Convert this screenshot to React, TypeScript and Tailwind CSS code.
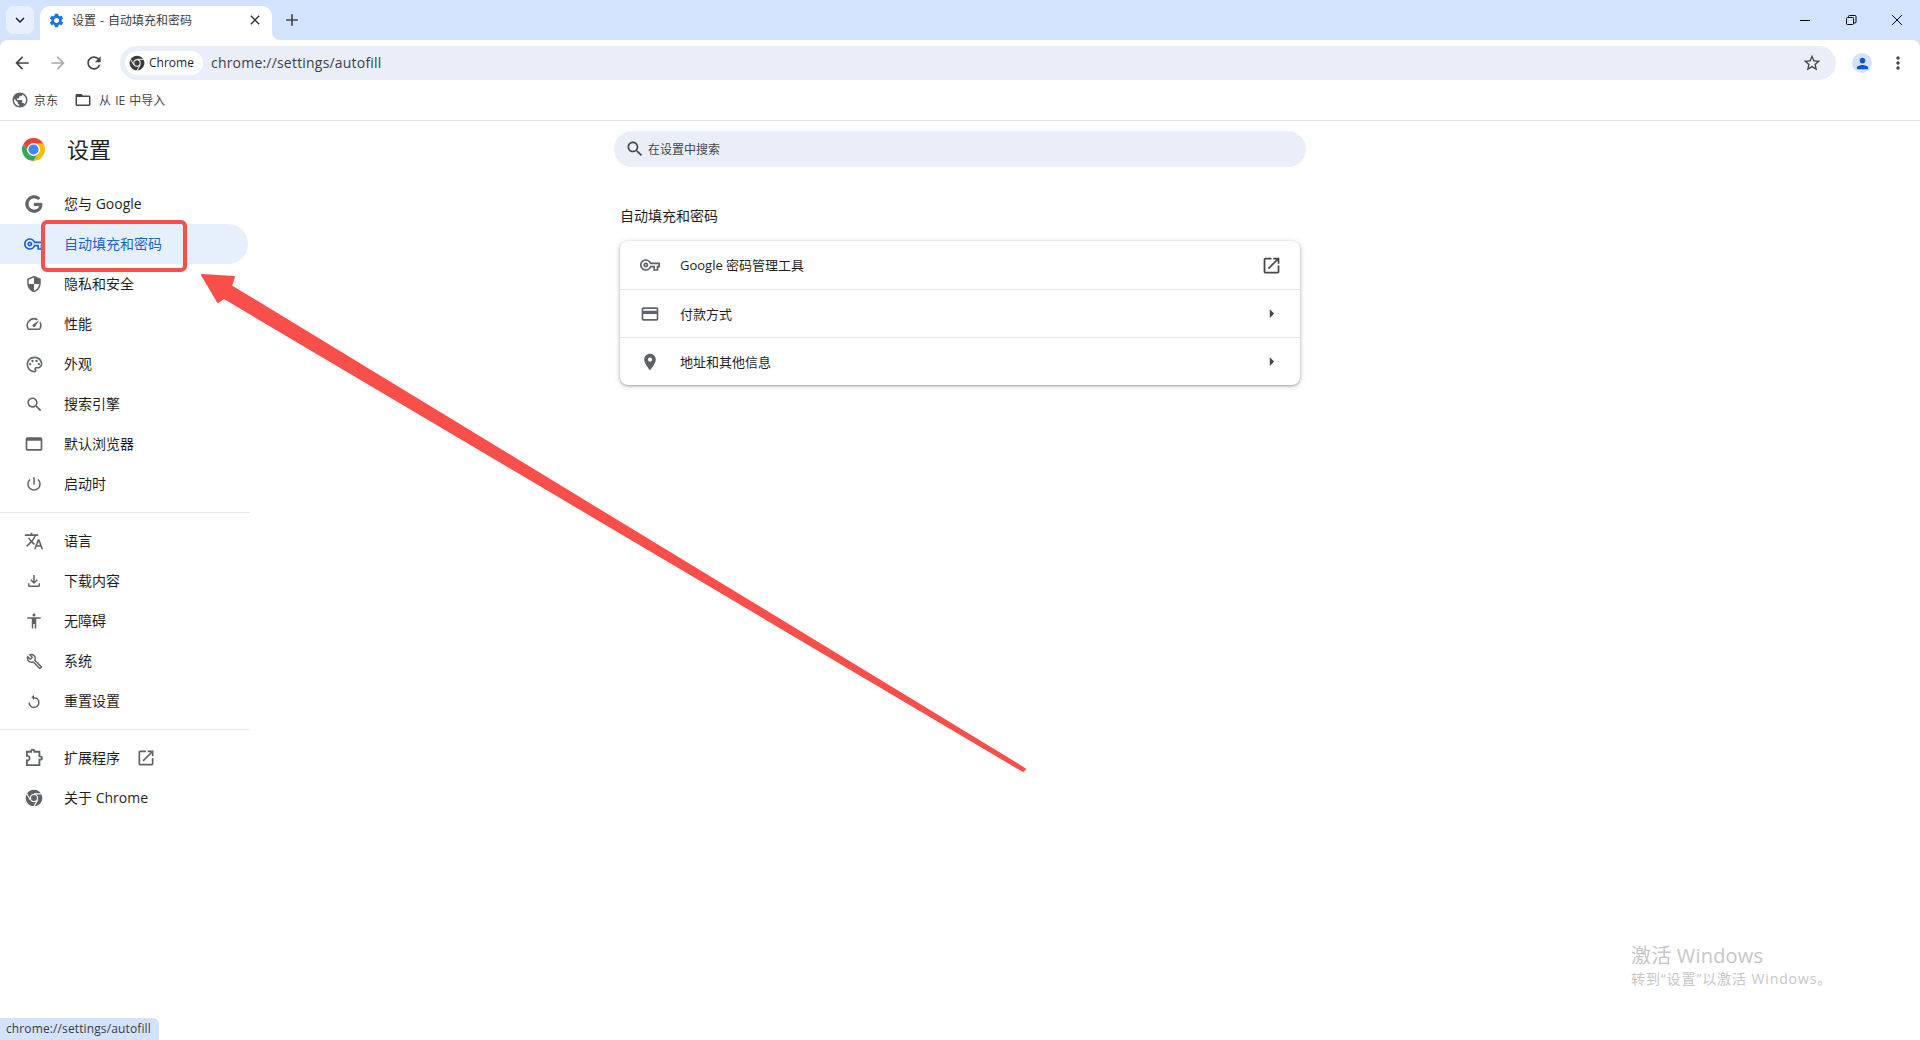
import React from 'react';

const paths = {
  key: 'M22 19h-6v-4h-2.68c-1.14 2.42-3.6 4-6.32 4-3.86 0-7-3.14-7-7s3.14-7 7-7c2.72 0 5.17 1.58 6.32 4H24v6h-2v4zm-4-2h2v-4h2v-2H11.95l-.23-.67C11.01 8.34 9.11 7 7 7c-2.76 0-5 2.24-5 5s2.24 5 5 5c2.11 0 4.01-1.34 4.72-3.33l.23-.67H18v4zM7 15c-1.65 0-3-1.35-3-3s1.35-3 3-3 3 1.35 3 3-1.35 3-3 3zm0-4c-.55 0-1 .45-1 1s.45 1 1 1 1-.45 1-1-.45-1-1-1z',
  google: 'M21.35 11.1H12.18V13.83H18.69C18.36 17.64 15.19 19.27 12.19 19.27C8.36 19.27 5 16.25 5 12C5 7.9 8.2 4.73 12.2 4.73C15.29 4.73 17.1 6.7 17.1 6.7L19 4.72C19 4.72 16.56 2 12.1 2C6.42 2 2.03 6.8 2.03 12C2.03 17.05 6.16 22 12.25 22C17.6 22 21.5 18.33 21.5 12.91C21.5 11.76 21.35 11.1 21.35 11.1Z',
  shield: 'M12 1L3 5v6c0 5.55 3.84 10.74 9 12 5.16-1.26 9-6.45 9-12V5l-9-4zm0 10.99h7c-.53 4.12-3.28 7.79-7 8.94V12H5V6.3l7-3.11v8.8z',
  speed: 'M20.38 8.57l-1.23 1.85a8 8 0 0 1-.22 7.58H5.07A8 8 0 0 1 15.58 6.85l1.85-1.23A10 10 0 0 0 3.35 19a2 2 0 0 0 1.72 1h13.85a2 2 0 0 0 1.74-1 10 10 0 0 0-.27-10.44zm-9.79 6.84a2 2 0 0 0 2.83 0l5.66-8.49-8.49 5.66a2 2 0 0 0 0 2.83z',
  palette: 'M12 22C6.49 22 2 17.51 2 12S6.49 2 12 2s10 4.04 10 9c0 3.31-2.69 6-6 6h-1.77c-.28 0-.5.22-.5.5 0 .12.05.23.13.33.41.47.64 1.06.64 1.67 0 1.38-1.12 2.5-2.5 2.5zm0-18c-4.41 0-8 3.59-8 8s3.59 8 8 8c.28 0 .5-.22.5-.5 0-.16-.08-.28-.14-.35-.41-.46-.63-1.05-.63-1.65 0-1.38 1.12-2.5 2.5-2.5H16c2.21 0 4-1.79 4-4 0-3.86-3.59-7-8-7zM6.5 10a1.5 1.5 0 1 0 0 3 1.5 1.5 0 0 0 0-3zm3-4a1.5 1.5 0 1 0 0 3 1.5 1.5 0 0 0 0-3zm5 0a1.5 1.5 0 1 0 0 3 1.5 1.5 0 0 0 0-3zm3 4a1.5 1.5 0 1 0 0 3 1.5 1.5 0 0 0 0-3z',
  search: 'M15.5 14h-.79l-.28-.27C15.41 12.59 16 11.11 16 9.5 16 5.91 13.09 3 9.5 3S3 5.91 3 9.5 5.91 16 9.5 16c1.61 0 3.09-.59 4.23-1.57l.27.28v.79l5 4.99L20.49 19l-4.99-5zm-6 0C7.01 14 5 11.99 5 9.5S7.01 5 9.5 5 14 7.01 14 9.5 11.99 14 9.5 14z',
  browser: 'M20 4H4c-1.11 0-2 .9-2 2v12c0 1.1.89 2 2 2h16c1.1 0 2-.9 2-2V6c0-1.1-.89-2-2-2zm0 14H4V8h16v10z',
  power: 'M13 3h-2v10h2V3zm4.83 2.17l-1.42 1.42C17.99 7.86 19 9.81 19 12c0 3.87-3.13 7-7 7s-7-3.13-7-7c0-2.19 1.01-4.14 2.58-5.42L6.17 5.17C4.23 6.82 3 9.26 3 12c0 4.97 4.03 9 9 9s9-4.03 9-9c0-2.74-1.23-5.18-3.17-6.83z',
  translate: 'M12.87 15.07l-2.54-2.51.03-.03c1.74-1.94 2.98-4.17 3.71-6.53H17V4h-7V2H8v2H1v1.99h11.17C11.5 7.92 10.44 9.75 9 11.35 8.07 10.32 7.3 9.19 6.69 8h-2c.73 1.63 1.73 3.17 2.98 4.56l-5.09 5.02L4 19l5-5 3.11 3.11.76-2.04zM18.5 10h-2L12 22h2l1.12-3h4.75L21 22h2l-4.5-12zm-2.62 7l1.62-4.33L19.12 17h-3.24z',
  download: 'M18 15v3H6v-3H4v3c0 1.1.9 2 2 2h12c1.1 0 2-.9 2-2v-3h-2zm-1-4l-1.41-1.41L13 12.17V4h-2v8.17L8.41 9.59 7 11l5 5 5-5z',
  accessibility: 'M12 2c1.1 0 2 .9 2 2s-.9 2-2 2-2-.9-2-2 .9-2 2-2zm9 7h-6v13h-2v-6h-2v6H9V9H3V7h18v2z',
  build: 'M22.61 18.99l-9.08-9.08c.93-2.34.45-5.1-1.44-7C9.79.61 6.21.4 3.66 2.26L7.5 6.11 6.08 7.52 2.25 3.69C.39 6.23.6 9.82 2.9 12.11c1.86 1.86 4.57 2.35 6.89 1.48l9.11 9.11c.39.39 1.02.39 1.41 0l2.3-2.3c.4-.38.4-1.01 0-1.41zm-3 1.6l-9.46-9.46c-.61.45-1.29.72-2 .82-1.36.2-2.79-.21-3.83-1.25C3.37 9.76 2.93 8.5 3 7.26l3.09 3.09 4.24-4.24-3.09-3.09c1.24-.07 2.49.37 3.44 1.31 1.08 1.08 1.49 2.57 1.24 3.96-.12.71-.42 1.37-.88 1.96l9.45 9.45-.88.88z',
  reset: 'M12 6.5V3.5L8.5 7l3.5 3.5V8.5a5.5 5.5 0 1 1-5.5 5.5H4.5A7.5 7.5 0 1 0 12 6.5z',
  open: 'M19 19H5V5h7V3H5c-1.11 0-2 .9-2 2v14c0 1.1.89 2 2 2h14c1.1 0 2-.9 2-2v-7h-2v7zM14 3v2h3.59l-9.83 9.83 1.41 1.41L19 6.41V10h2V3h-7z',
  card: 'M20 4H4c-1.11 0-1.99.89-1.99 2L2 18c0 1.11.89 2 2 2h16c1.11 0 2-.89 2-2V6c0-1.11-.89-2-2-2zm0 14H4v-6h16v6zm0-10H4V6h16v2z',
  pin: 'M12 2C8.13 2 5 5.13 5 9c0 5.25 7 13 7 13s7-7.75 7-13c0-3.87-3.13-7-7-7zm0 9.5c-1.38 0-2.5-1.12-2.5-2.5s1.12-2.5 2.5-2.5 2.5 1.12 2.5 2.5-1.12 2.5-2.5 2.5z',
  gear: 'M19.14 12.94c.04-.3.06-.61.06-.94 0-.32-.02-.64-.07-.94l2.03-1.58c.18-.14.23-.41.12-.61l-1.92-3.32c-.12-.22-.37-.29-.59-.22l-2.39.96c-.5-.38-1.03-.7-1.62-.94l-.36-2.54c-.04-.24-.24-.41-.48-.41h-3.84c-.24 0-.43.17-.47.41l-.36 2.54c-.59.24-1.13.57-1.62.94l-2.39-.96c-.22-.08-.47 0-.59.22L2.74 8.87c-.12.21-.08.47.12.61l2.03 1.58c-.05.3-.09.63-.09.94s.02.64.07.94l-2.03 1.58c-.18.14-.23.41-.12.61l1.92 3.32c.12.22.37.29.59.22l2.39-.96c.5.38 1.03.7 1.62.94l.36 2.54c.05.24.24.41.48.41h3.84c.24 0 .44-.17.47-.41l.36-2.54c.59-.24 1.13-.56 1.62-.94l2.39.96c.22.08.47 0 .59-.22l1.92-3.32c.12-.22.07-.47-.12-.61l-2.01-1.58zM12 15.6c-1.98 0-3.6-1.62-3.6-3.6s1.62-3.6 3.6-3.6 3.6 1.62 3.6 3.6-1.62 3.6-3.6 3.6z',
  globe: 'M12 2C6.48 2 2 6.48 2 12s4.48 10 10 10 10-4.48 10-10S17.52 2 12 2zm-1 17.93c-3.95-.49-7-3.85-7-7.93 0-.62.08-1.21.21-1.79L9 15v1c0 1.1.9 2 2 2v1.93zm6.9-2.54c-.26-.81-1-1.39-1.9-1.39h-1v-3c0-.55-.45-1-1-1H8v-2h2c.55 0 1-.45 1-1V7h2c1.1 0 2-.9 2-2v-.41c2.93 1.19 5 4.06 5 7.41 0 2.08-.8 3.97-2.1 5.39z',
  folder: 'M20 6h-8l-2-2H4c-1.1 0-1.99.9-1.99 2L2 18c0 1.1.9 2 2 2h16c1.1 0 2-.9 2-2V8c0-1.1-.9-2-2-2zm0 12H4V8h16v10z',
  back: 'M20 11H7.83l5.59-5.59L12 4l-8 8 8 8 1.41-1.41L7.83 13H20v-2z',
  forward: 'M12 4l-1.41 1.41L16.17 11H4v2h12.17l-5.58 5.59L12 20l8-8z',
  reload: 'M17.65 6.35C16.2 4.9 14.21 4 12 4c-4.42 0-7.99 3.58-7.99 8s3.57 8 7.99 8c3.73 0 6.84-2.55 7.73-6h-2.08c-.82 2.33-3.04 4-5.65 4-3.31 0-6-2.69-6-6s2.69-6 6-6c1.66 0 3.14.69 4.22 1.78L13 11h7V4l-2.35 2.35z',
  star: 'M22 9.24l-7.19-.62L12 2 9.19 8.63 2 9.24l5.46 4.73L5.82 21 12 17.27 18.18 21l-1.63-7.03L22 9.24zM12 15.4l-3.76 2.27 1-4.28-3.32-2.88 4.38-.38L12 6.1l1.71 4.04 4.38.38-3.32 2.88 1 4.28L12 15.4z',
  close: 'M19 6.41L17.59 5 12 10.59 6.41 5 5 6.41 10.59 12 5 17.59 6.41 19 12 13.41 17.59 19 19 17.59 13.41 12z',
  plus: 'M19 13h-6v6h-2v-6H5v-2h6V5h2v6h6v2z',
  chevronDown: 'M7.41 8.59L12 13.17l4.59-4.58L18 10l-6 6-6-6z',
  person: 'M12 12c2.21 0 4-1.79 4-4s-1.79-4-4-4-4 1.79-4 4 1.79 4 4 4zm0 2c-2.67 0-8 1.34-8 4v2h16v-2c0-2.66-5.33-4-8-4z',
  more: 'M12 8c1.1 0 2-.9 2-2s-.9-2-2-2-2 .9-2 2 .9 2 2 2zm0 2c-1.1 0-2 .9-2 2s.9 2 2 2 2-.9 2-2-.9-2-2-2zm0 6c-1.1 0-2 .9-2 2s.9 2 2 2 2-.9 2-2-.9-2-2-2z',
  arrowRight: 'M10 7l5 5-5 5z',
};

type IconName = keyof typeof paths;

function Icon({ name, size = 18, className = 'text-[#474747]', bold }: { name: IconName; size?: number; className?: string; bold?: boolean }) {
  return (
    <svg width={size} height={size} viewBox="0 0 24 24" fill="currentColor" className={`shrink-0 ${className}`}>
      <path d={paths[name]} stroke={bold ? 'currentColor' : undefined} strokeWidth={bold ? 1.1 : undefined} />
    </svg>
  );
}

// blocky outline puzzle piece, the settings one
function ExtensionIcon() {
  return (
    <svg width="20" height="20" viewBox="0 0 24 24" fill="none" stroke="#5f6368" strokeWidth="2.2" className="shrink-0">
      <path d="M3.5 4.5H8.5V4a2 2 0 0 1 4 0V4.5H18.5V10H19.5a2 2 0 0 1 0 4H18.5V20.5H3.5V15H4.5a2.8 2.8 0 0 0 0-5.5H3.5Z" />
    </svg>
  );
}

function ChromeLogo({ size, mono }: { size: number; mono?: string }) {
  return (
    <svg width={size} height={size} viewBox="0 0 24 24" className="shrink-0">
      <path d="M2.47 6.5A11 11 0 0 1 21.53 6.5H12L7.24 14.75Z" fill={mono ?? '#ea4335'} />
      <path d="M21.53 6.5A11 11 0 0 1 12 23L16.76 14.75L12 6.5Z" fill={mono ?? '#fbbc04'} />
      <path d="M12 23A11 11 0 0 1 2.47 6.5L7.24 14.75H16.76Z" fill={mono ?? '#34a853'} />
      {mono && <path d="M12 6.5H22M16.76 14.75L12 23.5M7.24 14.75L2 6" stroke="#fff" strokeWidth="1.4" fill="none" />}
      <circle cx="12" cy="12" r={mono ? 5.5 : 6.2} fill="#fff" />
      <circle cx="12" cy="12" r={mono ? 4 : 4.9} fill={mono ?? '#4285f4'} />
    </svg>
  );
}

const navGroups: { icon: IconName | 'chrome' | 'extension'; label: string; size?: number; active?: boolean; external?: boolean; bold?: boolean }[][] = [
  [
    { icon: 'google', label: '您与 Google', size: 20, bold: true },
    { icon: 'key', label: '自动填充和密码', active: true, size: 20 },
    { icon: 'shield', label: '隐私和安全' },
    { icon: 'speed', label: '性能' },
    { icon: 'palette', label: '外观', size: 19 },
    { icon: 'search', label: '搜索引擎', size: 19 },
    { icon: 'browser', label: '默认浏览器', size: 20 },
    { icon: 'power', label: '启动时' },
  ],
  [
    { icon: 'translate', label: '语言', size: 20 },
    { icon: 'download', label: '下载内容' },
    { icon: 'accessibility', label: '无障碍' },
    { icon: 'build', label: '系统', size: 17 },
    { icon: 'reset', label: '重置设置', size: 18 },
  ],
  [
    { icon: 'extension', label: '扩展程序', external: true },
    { icon: 'chrome', label: '关于 Chrome' },
  ],
];

const cardRows: { icon: IconName; label: string; trailing: IconName; size?: number }[] = [
  { icon: 'key', label: 'Google 密码管理工具', trailing: 'open', size: 20 },
  { icon: 'card', label: '付款方式', trailing: 'arrowRight', size: 20 },
  { icon: 'pin', label: '地址和其他信息', trailing: 'arrowRight', size: 20 },
];

function TabStrip() {
  return (
    <div className="h-10 bg-[#d3e3fd] flex items-end pl-[6px] relative">
      <div className="w-7 h-7 mb-[6px] rounded-lg bg-[#e9f0fd] flex items-center justify-center">
        <Icon name="chevronDown" size={18} className="text-[#1f1f1f]" />
      </div>
      <div className="relative ml-[6px] w-[232px] h-[34px] bg-white rounded-t-[10px] flex items-center pl-[8px] pr-[9px] pb-[6px] z-10">
        <Icon name="gear" size={17} className="text-[#1a73e8]" />
        <span className="ml-[7px] text-xs text-[#3c3c3c] flex-1 [word-spacing:1px] pt-px">设置 - 自动填充和密码</span>
        <Icon name="close" size={16} className="text-[#303030]" />
        <span className="absolute left-full bottom-0 w-2 h-2 bg-white">
          <span className="block w-2 h-2 bg-[#d3e3fd] rounded-bl-lg" />
        </span>
      </div>
      <div className="ml-[10px] mb-[10px] w-5 h-5 flex items-center justify-center">
        <Icon name="plus" size={20} className="text-[#444746]" />
      </div>
      <div className="ml-auto flex items-center h-10 self-start text-black">
        <svg width="46" height="40" viewBox="0 0 46 40" className="shrink-0" fill="none" stroke="currentColor">
          <path d="M18 20.5H28" />
        </svg>
        <svg width="46" height="40" viewBox="0 0 46 40" className="shrink-0" fill="none" stroke="currentColor">
          <rect x="18.5" y="17.5" width="7" height="7" rx="1" />
          <path d="M20.5 17.5V16.5a1 1 0 0 1 1-1H27a1 1 0 0 1 1 1V22a1 1 0 0 1-1 1H25.5" />
        </svg>
        <svg width="46" height="40" viewBox="0 0 46 40" className="shrink-0" fill="none" stroke="currentColor">
          <path d="M18 15L28 25M28 15L18 25" />
        </svg>
      </div>
    </div>
  );
}

function Toolbar() {
  return (
    <div className="h-10 bg-[#d3e3fd]">
      <div className="h-10 bg-white rounded-t-lg flex items-center pt-[6px] pl-[12px] pr-[12px]">
        <Icon name="back" size={20} className="text-[#444746]" />
        <Icon name="forward" size={20} className="ml-[16px] text-[#a9abad]" />
        <Icon name="reload" size={20} className="ml-[16px] text-[#444746]" />
        <div className="ml-[16px] flex-1 h-[34px] rounded-full bg-[#e9eef8] flex items-center pl-[5px] pr-[14px]">
          <div className="h-6 w-[78px] rounded-full bg-white flex items-center pl-[4px]">
            <ChromeLogo size={16} mono="#3c3c3c" />
            <span className="ml-[4px] text-xs text-[#1f1f1f]">Chrome</span>
          </div>
          <span className="ml-2 text-sm text-[#3c4043] tracking-[0.2px]">chrome://settings/autofill</span>
          <Icon name="star" size={20} className="ml-auto text-[#444746]" />
        </div>
        <div className="ml-4 w-5 h-5 rounded-full bg-[#d3e3fd] flex items-center justify-center">
          <Icon name="person" size={17} className="text-[#0b57d0]" />
        </div>
        <Icon name="more" size={20} className="ml-[16px] text-[#444746]" />
      </div>
    </div>
  );
}

function BookmarksBar() {
  return (
    <div className="h-[41px] border-b border-[#e1e3e6] flex items-center pl-[11px] text-xs text-[#474747]">
      <Icon name="globe" size={18} className="text-[#5f6368]" />
      <span className="ml-[5px] pt-[2px]">京东</span>
      <Icon name="folder" size={18} className="ml-[16px] text-[#474747]" />
      <span className="ml-[7px] pt-[2px] [word-spacing:1px]">从 IE 中导入</span>
    </div>
  );
}

function Sidebar() {
  return (
    <aside className="w-[250px] shrink-0">
      <div className="h-[63px] flex items-center pl-[21px] pb-[7px]">
        <ChromeLogo size={25} />
        <span className="ml-[21px] text-[22px] text-[#1f1f1f]">设置</span>
      </div>
      {navGroups.map((group, i) => (
        <div key={i} className={i > 0 ? 'mt-2 pt-2 border-t border-[#e8e8e8]' : ''}>
          {group.map(item => (
            <div
              key={item.label}
              className={`h-10 flex items-center text-sm ${
                item.active ? 'w-[248px] rounded-r-full bg-[#e6effc] text-[#1a62d6]' : 'text-[#1f1f1f]'
              }`}
            >
              <span className="w-[64px] pl-[24px] pr-[20px] h-5 flex items-center justify-center shrink-0">
                {item.icon === 'chrome' ? (
                  <ChromeLogo size={18} mono="#5f6368" />
                ) : item.icon === 'extension' ? (
                  <ExtensionIcon />
                ) : (
                  <Icon
                    name={item.icon}
                    size={item.size ?? 18}
                    bold={item.bold}
                    className={item.active ? 'text-[#1a62d6]' : 'text-[#5f6368]'}
                  />
                )}
              </span>
              <span>{item.label}</span>
              {item.external && <Icon name="open" size={20} className="ml-[16px] text-[#5f6368]" />}
            </div>
          ))}
        </div>
      ))}
    </aside>
  );
}

function Content() {
  return (
    <main className="flex-1 pr-[250px] flex flex-col items-center pt-[10px]">
      <div className="w-[692px] h-9 rounded-full bg-[#e9eef8] flex items-center pl-[11px]">
        <Icon name="search" size={20} className="text-[#474747]" />
        <span className="ml-[3px] pt-px text-xs text-[#444746]">在设置中搜索</span>
      </div>
      <div className="w-[680px] mt-[40px] mb-[16px] text-sm text-[#1f1f1f] leading-[18px]">自动填充和密码</div>
      <div className="w-[680px] rounded-lg bg-white shadow-[0_1px_2px_rgba(60,64,67,0.35),0_1px_5px_1px_rgba(60,64,67,0.2)]">
        {cardRows.map((row, i) => (
          <div
            key={row.label}
            className={`h-12 flex items-center text-[13px] text-[#1f1f1f] pl-[20px] pr-[18px] ${i > 0 ? 'border-t border-[#e8e8e8]' : ''}`}
          >
            <span className="w-5 flex justify-center">
              <Icon name={row.icon} size={row.size ?? 18} className="text-[#5f6368]" />
            </span>
            <span className="ml-[20px] pt-[2px] flex-1">{row.label}</span>
            {row.trailing === 'open' ? (
              <Icon name="open" size={21} className="text-[#474747]" />
            ) : (
              <Icon name="arrowRight" size={21} className="text-[#474747]" />
            )}
          </div>
        ))}
      </div>
    </main>
  );
}

export default function App() {
  return (
    <div className="relative h-[1040px] w-full overflow-hidden bg-white font-['Open_Sans','Noto_Sans_CJK_SC',sans-serif]">
      <TabStrip />
      <Toolbar />
      <BookmarksBar />
      <div className="flex">
        <Sidebar />
        <Content />
      </div>

      {/* annotation drawn over the page */}
      <div className="absolute left-[41px] top-[220px] w-[146px] h-[52px] rounded-md border-4 border-[#f94f4b]" />
      <svg width="1920" height="1040" className="absolute left-0 top-0 pointer-events-none">
        <polygon
          points="202,275 234,277 231,286 1025,769 1023,771 224,298 218,302"
          fill="#f94f4b"
          stroke="#f94f4b"
          strokeWidth="2"
          strokeLinejoin="round"
        />
      </svg>

      <div className="absolute left-[1631px] top-[942px] text-[#c6c6c6]">
        <div className="text-xl leading-7 tracking-[0.2px]">激活 Windows</div>
        <div className="text-sm leading-[18px] tracking-[0.9px]">转到“设置”以激活 Windows。</div>
      </div>

      <div className="absolute left-0 bottom-0 h-[22px] w-[159px] bg-[#d3e3fd] rounded-tr-md pl-[6px] flex items-center text-xs text-[#3c3c3c] tracking-[0.12px]">
        chrome://settings/autofill
      </div>
    </div>
  );
}
